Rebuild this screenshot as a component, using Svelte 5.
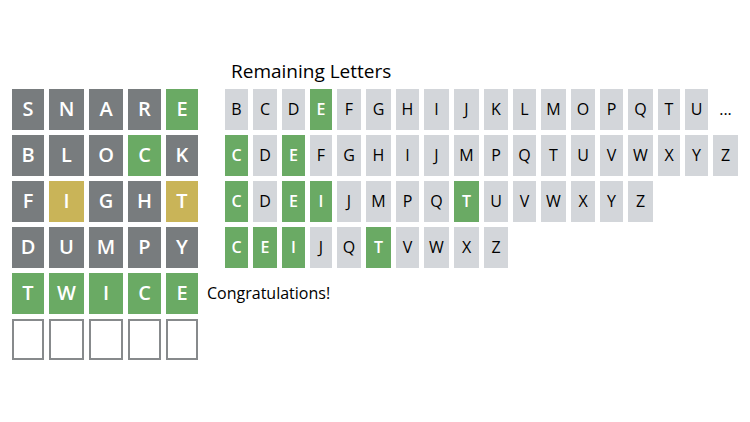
<script>
  const slots = [0, 1, 2, 3, 4];
  const wordColumns = [32, 35, 34, 33, 32];
  const letterColumns = [23, 24, 23, 22, 24, 25, 23, 25, 25, 24, 23, 25, 24, 23, 25, 22, 23, 25];

  // marks: g = right place, y = wrong place, x = not in the word
  const guesses = [
    { word: 'SNARE', marks: 'xxxxg', remaining: 'BCDEFGHIJKLMOPQTU…', known: 'E' },
    { word: 'BLOCK', marks: 'xxxgx', remaining: 'CDEFGHIJMPQTUVWXYZ', known: 'CE' },
    { word: 'FIGHT', marks: 'xyxxy', remaining: 'CDEIJMPQTUVWXYZ', known: 'CEIT' },
    { word: 'DUMPY', marks: 'xxxxx', remaining: 'CEIJQTVWXZ', known: 'CEIT' },
    { word: 'TWICE', marks: 'ggggg', message: 'Congratulations!' },
    { word: '', marks: '' }
  ];
</script>

<main>
  <table>
    <colgroup>
      {#each wordColumns as width}
        <col style="width: {width}px" />
      {/each}
      <col class="gutter" />
      {#each letterColumns as width}
        <col style="width: {width}px" />
      {/each}
    </colgroup>
    <thead>
      <tr>
        <td colspan="6"></td>
        <th colspan="18" scope="colgroup">Remaining Letters</th>
      </tr>
    </thead>
    <tbody>
      {#each guesses as guess}
        <tr>
          {#each slots as i}
            <td
              class="tile"
              class:empty={!guess.word}
              class:green={guess.marks[i] === 'g'}
              class:yellow={guess.marks[i] === 'y'}>{guess.word[i] ?? ''}</td>
          {/each}
          {#if guess.message}
            <td class="message" colspan="19">{guess.message}</td>
          {:else}
            <td></td>
            {#each guess.remaining ?? '' as letter}
              <td
                class="letter"
                class:known={guess.known.includes(letter)}
                class:more={letter === '…'}>{letter === '…' ? '...' : letter}</td>
            {/each}
          {/if}
        </tr>
      {/each}
    </tbody>
  </table>
</main>

<style>
  :global(body) {
    margin: 0;
    background: #fff;
  }
  main {
    padding: 51px 7px;
    font-family: "Open Sans", "Noto Sans", sans-serif;
    font-size: 16px;
    line-height: 24px;
    color: #000;
  }
  table {
    table-layout: fixed;
    width: 100%;
    border-collapse: separate;
    border-spacing: 5px;
  }
  td,
  th {
    box-sizing: border-box;
    padding: 0;
  }
  .gutter {
    width: 17px;
  }
  thead th {
    height: 28px;
    padding: 2px 0 0 6px;
    text-align: left;
    font-size: 19px;
    line-height: 26px;
    font-weight: 400;
  }
  tbody td {
    height: 41px;
    padding-bottom: 2px;
    text-align: center;
    vertical-align: middle;
  }
  .tile {
    background: #787c7e;
    color: #fff;
    font-size: 20px;
    font-weight: 600;
  }
  .green {
    background: #6aaa64;
  }
  .yellow {
    background: #c9b458;
  }
  .empty {
    background: #fff;
    border: 2px solid #878a8c;
  }
  .letter {
    background: #d3d6da;
  }
  .known {
    background: #6aaa64;
    color: #fff;
    font-weight: 600;
  }
  .more {
    background: none;
  }
  tbody .message {
    padding-left: 4px;
    text-align: left;
  }
</style>
